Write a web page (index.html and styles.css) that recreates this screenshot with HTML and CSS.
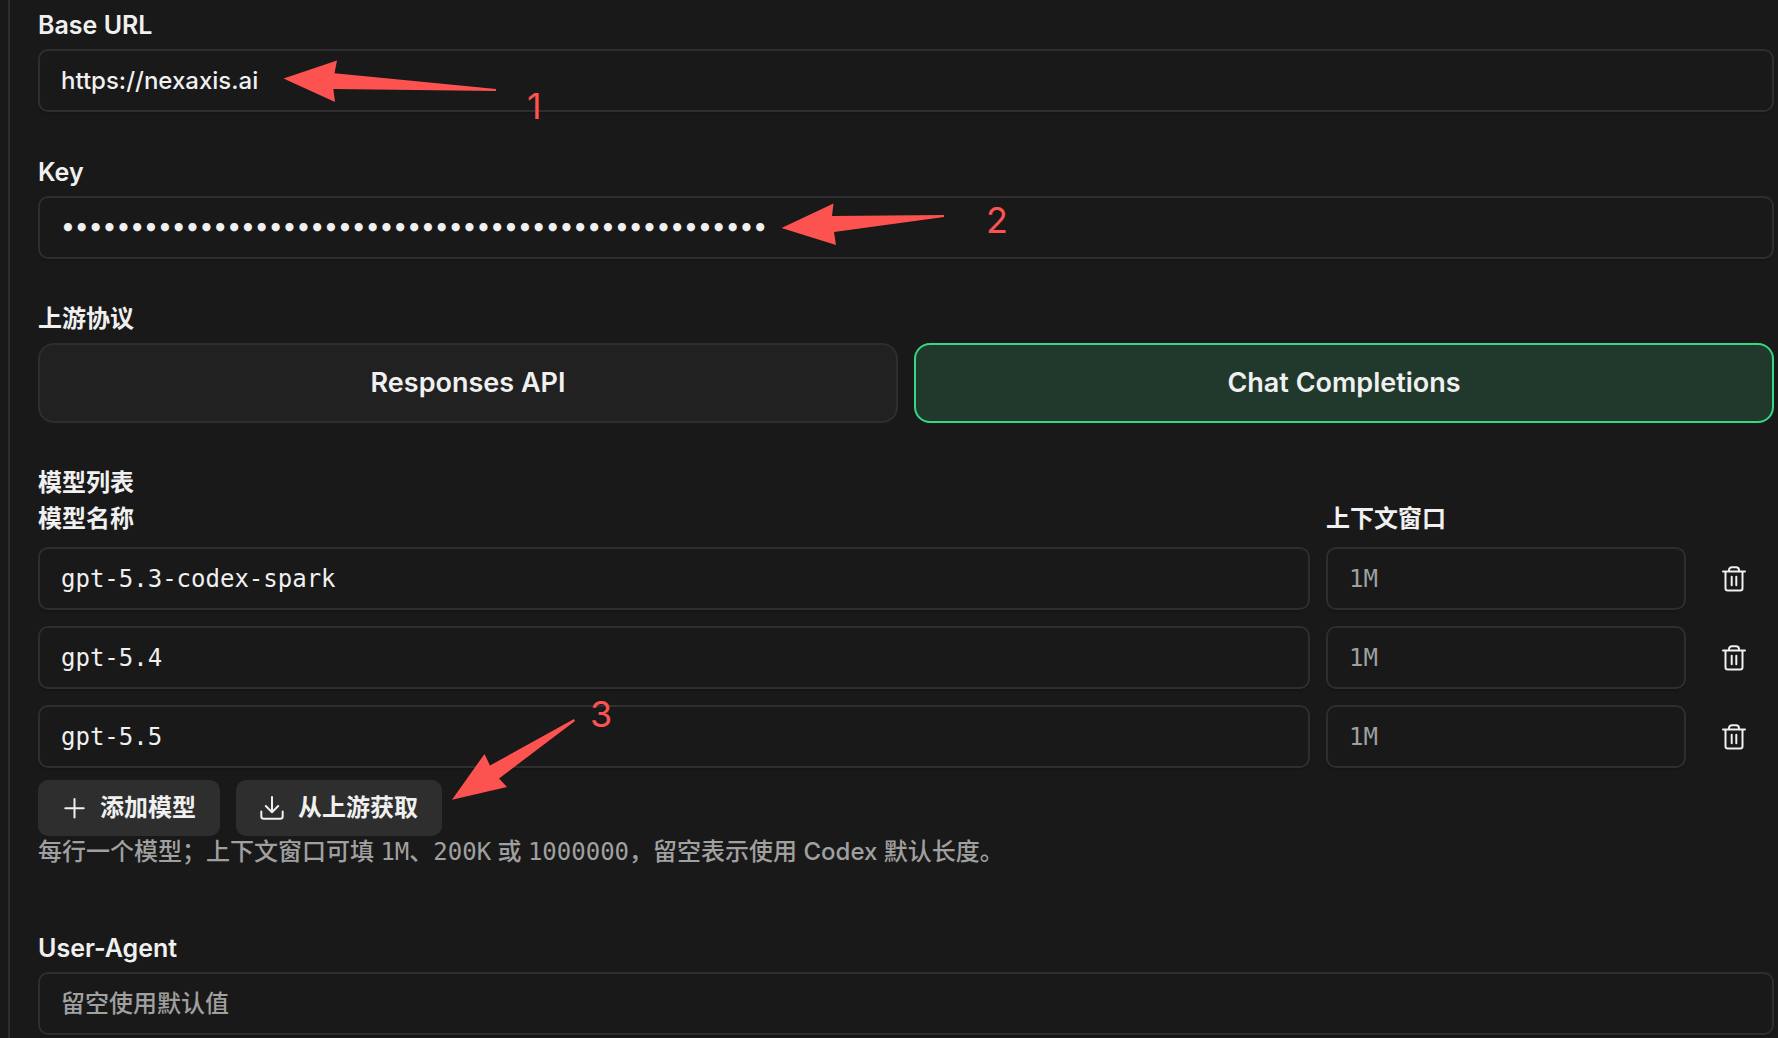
FILE: index.html
```
<!DOCTYPE html>
<html lang="zh-CN">
<head>
  <meta charset="UTF-8">
  <meta name="viewport" content="width=device-width, initial-scale=1.0">
  <title>Codex</title>
  <link rel="stylesheet" href="styles.css">
</head>
<body>
  <svg class="sprite" aria-hidden="true">
    <symbol id="icon-trash" viewBox="0 0 24 26">
      <path d="M1 5.5h22M7 5.5V4.2C7 2.300 8.300 1.200 10 1.200h4c1.700 0 3 1.100 3 3v1.300M3.500 5.500v16.800c0 1.400.9 2.300 2.300 2.300h12.400c1.400 0 2.300-.9 2.300-2.300V5.500M9.700 10.800v8.400M14.300 10.800v8.400"/>
    </symbol>
    <symbol id="icon-plus" viewBox="0 0 24 24">
      <path d="M12.500 3v18.500M3.300 12.200h18.400"/>
    </symbol>
    <symbol id="icon-download" viewBox="0 0 24 24">
      <path d="M12 1v15M5.800 10l6.200 6.200 6.200-6.200M1.300 15.500v4.800c0 1.500 1 2.500 2.500 2.500h16.400c1.500 0 2.500-1 2.500-2.500v-4.800"/>
    </symbol>
  </svg>

  <main class="panel">
    <div class="field">
      <label class="label" for="base-url">Base URL</label>
      <input class="input" id="base-url" type="text" value="https://nexaxis.ai">
    </div>

    <div class="field">
      <label class="label" for="key">Key</label>
      <input class="input input-key" id="key" type="password" value="000000000000000000000000000000000000000000000000000">
    </div>

    <div class="field">
      <div class="label" id="protocol-label">上游协议</div>
      <div class="protocols" role="group" aria-labelledby="protocol-label">
        <button class="protocol" type="button" aria-pressed="false">Responses API</button>
        <button class="protocol active" type="button" aria-pressed="true">Chat Completions</button>
      </div>
    </div>

    <div class="models">
      <div class="label">模型列表</div>
      <div class="model-row model-head">
        <div class="label" id="model-name">模型名称</div>
        <div class="label" id="model-context">上下文窗口</div>
      </div>
      <div class="model-list">
        <div class="model-row">
          <input class="input mono" type="text" value="gpt-5.3-codex-spark" aria-labelledby="model-name">
          <input class="input mono" type="text" placeholder="1M" aria-labelledby="model-context">
          <button class="delete" type="button" aria-label="删除"><svg class="icon-trash"><use href="#icon-trash"/></svg></button>
        </div>
        <div class="model-row">
          <input class="input mono" type="text" value="gpt-5.4" aria-labelledby="model-name">
          <input class="input mono" type="text" placeholder="1M" aria-labelledby="model-context">
          <button class="delete" type="button" aria-label="删除"><svg class="icon-trash"><use href="#icon-trash"/></svg></button>
        </div>
        <div class="model-row">
          <input class="input mono" type="text" value="gpt-5.5" aria-labelledby="model-name">
          <input class="input mono" type="text" placeholder="1M" aria-labelledby="model-context">
          <button class="delete" type="button" aria-label="删除"><svg class="icon-trash"><use href="#icon-trash"/></svg></button>
        </div>
      </div>
      <div class="actions">
        <button class="action" type="button"><svg class="icon"><use href="#icon-plus"/></svg>添加模型</button>
        <button class="action" type="button"><svg class="icon"><use href="#icon-download"/></svg>从上游获取</button>
      </div>
      <p class="hint">每行一个模型；上下文窗口可填 <span class="mono">1M</span>、<span class="mono">200K</span> 或 <span class="mono">1000000</span>，留空表示使用 Codex 默认长度。</p>
    </div>

    <div class="field">
      <label class="label" for="user-agent">User-Agent</label>
      <input class="input" id="user-agent" type="text" placeholder="留空使用默认值">
    </div>
  </main>

  <!-- numbered steps over the form -->
  <svg class="notes" width="1020" height="820">
    <path d="M283.500 78.500L337 60.500L334.500 73.300L496 89V91L333.300 89L335 102Z"/>
    <path d="M781.500 228L833.500 203.500L832 216L944 215V217L834 232L836 245Z"/>
    <path d="M452 799.700L484.500 754L490 765.500L574 719L575 721L499 778.500L507 787Z"/>
    <text x="527" y="119">1</text>
    <text x="986" y="233">2</text>
    <text x="590" y="727">3</text>
  </svg>
</body>
</html>
```

FILE: styles.css
```
* {
  box-sizing: border-box;
}
body {
  margin: 0;
  background: #191919;
  color: #f0f0f0;
  font-family: Inter, "Noto Sans CJK SC", sans-serif;
  font-size: 24px;
  font-weight: 500;
  line-height: 32px;
}
button, input {
  font: inherit;
  color: inherit;
}
.sprite {
  display: none;
}
.panel {
  display: flex;
  flex-direction: column;
  gap: 44px;
  min-height: 100vh;
  margin-left: 8px;
  padding: 9px 4px 0 28px;
  border-left: 2px solid #2e2e2e;
}
.field {
  display: flex;
  flex-direction: column;
  gap: 8px;
}
.label {
  font-weight: 600;
}
label.label {
  font-size: 25px;
}
.input {
  width: 100%;
  min-width: 0;
  height: 63px;
  padding: 0 21px;
  border: 2px solid #2e2e2e;
  border-radius: 10px;
  background: #191919;
  box-shadow: 0 2px 2px rgba(0, 0, 0, 0.15);
  outline: none;
}
.input::placeholder {
  color: #a0a0a0;
  opacity: 1;
}
.mono {
  font-family: "DejaVu Sans Mono", "Noto Sans CJK SC", monospace;
}
.input-key {
  font-family: "DejaVu Sans Mono", monospace;
  font-size: 23px;
  font-weight: 700;
}

.protocols {
  display: grid;
  grid-template-columns: 1fr 1fr;
  gap: 16px;
}
.protocol {
  height: 80px;
  border: 2px solid #2e2e2e;
  border-radius: 16px;
  background: #212121;
  font-size: 27px;
  font-weight: 600;
}
.protocol.active {
  border-color: #34d980;
  background: #21392c;
}

.models {
  display: flex;
  flex-direction: column;
  margin-bottom: 20px;
}
.model-row {
  display: grid;
  grid-template-columns: 1fr 360px 64px;
  gap: 16px;
  padding-right: 8px;
}
.model-head {
  margin: 4px 0 12px;
}
.model-list {
  display: flex;
  flex-direction: column;
  gap: 16px;
}
.delete {
  display: flex;
  align-items: center;
  justify-content: center;
  padding: 0;
  border: 0;
  background: none;
}
.icon, .icon-trash {
  width: 24px;
  height: 24px;
  fill: none;
  stroke: currentColor;
  stroke-width: 2;
  stroke-linecap: round;
  stroke-linejoin: round;
}
.icon-trash {
  height: 26px;
}
.actions {
  display: flex;
  gap: 16px;
  margin-top: 12px;
}
.action {
  display: flex;
  align-items: center;
  gap: 14px;
  height: 56px;
  padding: 0 24px;
  border: 0;
  border-radius: 10px;
  background: #2e2e2e;
  font-weight: 600;
}
.hint {
  margin: 0;
  color: #a0a0a0;
}

.notes {
  position: absolute;
  top: 0;
  left: 0;
  pointer-events: none;
  fill: #fd5350;
  font-size: 36px;
  font-weight: 400;
}
```
